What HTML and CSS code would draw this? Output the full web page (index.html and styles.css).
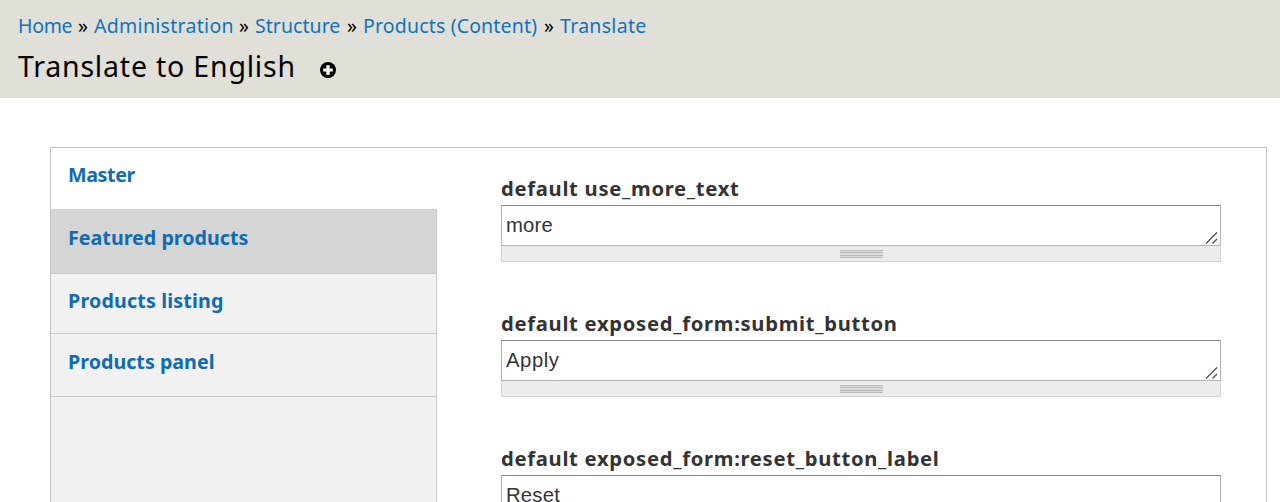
FILE: index.html
```html
<!DOCTYPE html>
<html lang="en">
<head>
<meta charset="utf-8">
<title>Translate to English</title>
<link rel="stylesheet" href="styles.css">
</head>
<body>
<header class="branding">
  <nav class="breadcrumb"><a class="bc-home">Home</a><span>»</span><a class="bc-admin">Administration</a><span>»</span><a class="bc-structure">Structure</a><span>»</span><a class="bc-products">Products (Content)</a><span>»</span><a class="bc-translate">Translate</a></nav>
  <div class="title-row">
    <h1>Translate to English</h1>
    <svg class="add-icon" width="18" height="18" viewBox="0 0 18 18"><circle cx="9" cy="9" r="8" fill="#000"/><path d="M9 4.2v9.6M4.2 9h9.6" stroke="#fff" stroke-width="3.2"/></svg>
  </div>
</header>
<main class="vertical-tabs">
  <ul class="tabs">
    <li class="tab selected"><a>Master</a></li>
    <li class="tab hover"><a>Featured products</a></li>
    <li class="tab listing"><a>Products listing</a></li>
    <li class="tab panel"><a>Products panel</a></li>
  </ul>
  <form class="panes">
    <div class="field">
      <label>default use_more_text</label>
      <div class="textarea">more<svg class="resizer" width="13" height="13" viewBox="0 0 13 13"><path d="M1 12.5L12 1.5M7.5 12.5L12 8" stroke="#555" stroke-width="1.4"/></svg></div>
      <div class="grippie"><i></i></div>
    </div>
    <div class="field">
      <label>default exposed_form:submit_button</label>
      <div class="textarea apply">Apply<svg class="resizer" width="13" height="13" viewBox="0 0 13 13"><path d="M1 12.5L12 1.5M7.5 12.5L12 8" stroke="#555" stroke-width="1.4"/></svg></div>
      <div class="grippie"><i></i></div>
    </div>
    <div class="field">
      <label>default exposed_form:reset_button_label</label>
      <div class="textarea">Reset</div>
    </div>
  </form>
</main>
</body>
</html>
```
FILE: styles.css
```css
* { box-sizing: border-box; }
body {
  margin: 0;
  height: 502px;
  overflow: hidden;
  background: #fff;
  color: #000;
  font-family: "Noto Sans", "Open Sans", sans-serif;
}
.branding {
  height: 98px;
  padding: 12px 18px 0;
  background: #e0dfd8;
}
.breadcrumb {
  display: flex;
  gap: 6px;
  height: 28px;
  font-size: 19.5px;
  line-height: 28px;
  white-space: nowrap;
}
.breadcrumb a { color: #0f74bd; letter-spacing: 0.3px; }
.breadcrumb span { width: 10px; }
.breadcrumb .bc-home { width: 54px; letter-spacing: -0.3px; }
.bc-admin { width: 139px; }
.breadcrumb .bc-structure { width: 86px; letter-spacing: 0.05px; }
.breadcrumb .bc-products { width: 175px; letter-spacing: 0.17px; }
.title-row { display: flex; align-items: flex-start; height: 50px; }
h1 {
  width: 301px;
  margin: 6px 0 0;
  font-size: 28.5px;
  font-weight: 400;
  line-height: 40px;
  letter-spacing: 0.8px;
  white-space: nowrap;
}
.add-icon { margin-top: 21px; }
.vertical-tabs {
  display: flex;
  width: 1217px;
  height: 355px;
  margin: 49px 0 0 50px;
  border: 1px solid #c4c4c4;
  border-bottom: 0;
  overflow: hidden;
}
.tabs {
  width: 386px;
  margin: 0;
  padding: 0;
  list-style: none;
  background: #f1f1f1;
  border-right: 1px solid #ccc;
}
.tab {
  height: 63px;
  padding: 13px 17px 0;
  border-bottom: 1px solid #c8c8c8;
  font-size: 19.7px;
  font-weight: 700;
  line-height: 28px;
  color: #0f6cb4;
}
.tab.selected {
  width: 386px;
  height: 62px;
  background: #fff;
  border-bottom-color: #d0d0d0;
  letter-spacing: -0.4px;
}
.tab.hover { height: 64px; background: #d5d5d5; padding-top: 14px; }
.tab.listing { height: 60px; letter-spacing: 0.15px; }
.tab.panel { padding-top: 14px; }
.panes { width: 784px; padding: 27px 0 0 64px; }
.field { width: 720px; height: 135px; }
.field label {
  display: block;
  height: 30px;
  font-size: 20.2px;
  font-weight: 700;
  line-height: 26px;
  letter-spacing: 0.71px;
  color: #333;
  white-space: nowrap;
}
.textarea {
  position: relative;
  width: 720px;
  height: 41px;
  padding: 0 4px;
  border: 1px solid #b4b4b4;
  border-top-color: #888;
  font-family: "Liberation Sans", Arial, sans-serif;
  font-size: 20.3px;
  line-height: 38px;
  letter-spacing: 0.2px;
  color: #333;
}
.textarea.apply { letter-spacing: 0.55px; }
.resizer { position: absolute; right: 2px; bottom: 1px; }
.grippie {
  display: flex;
  justify-content: center;
  width: 720px;
  height: 16px;
  padding-top: 4px;
  background: #ececec;
  border: 1px solid #d4d4d4;
  border-top: 0;
}
.grippie i {
  width: 43px;
  height: 8px;
  background: repeating-linear-gradient(#bcbcbc 0 1px, #dadada 1px 2.33px);
}
```
